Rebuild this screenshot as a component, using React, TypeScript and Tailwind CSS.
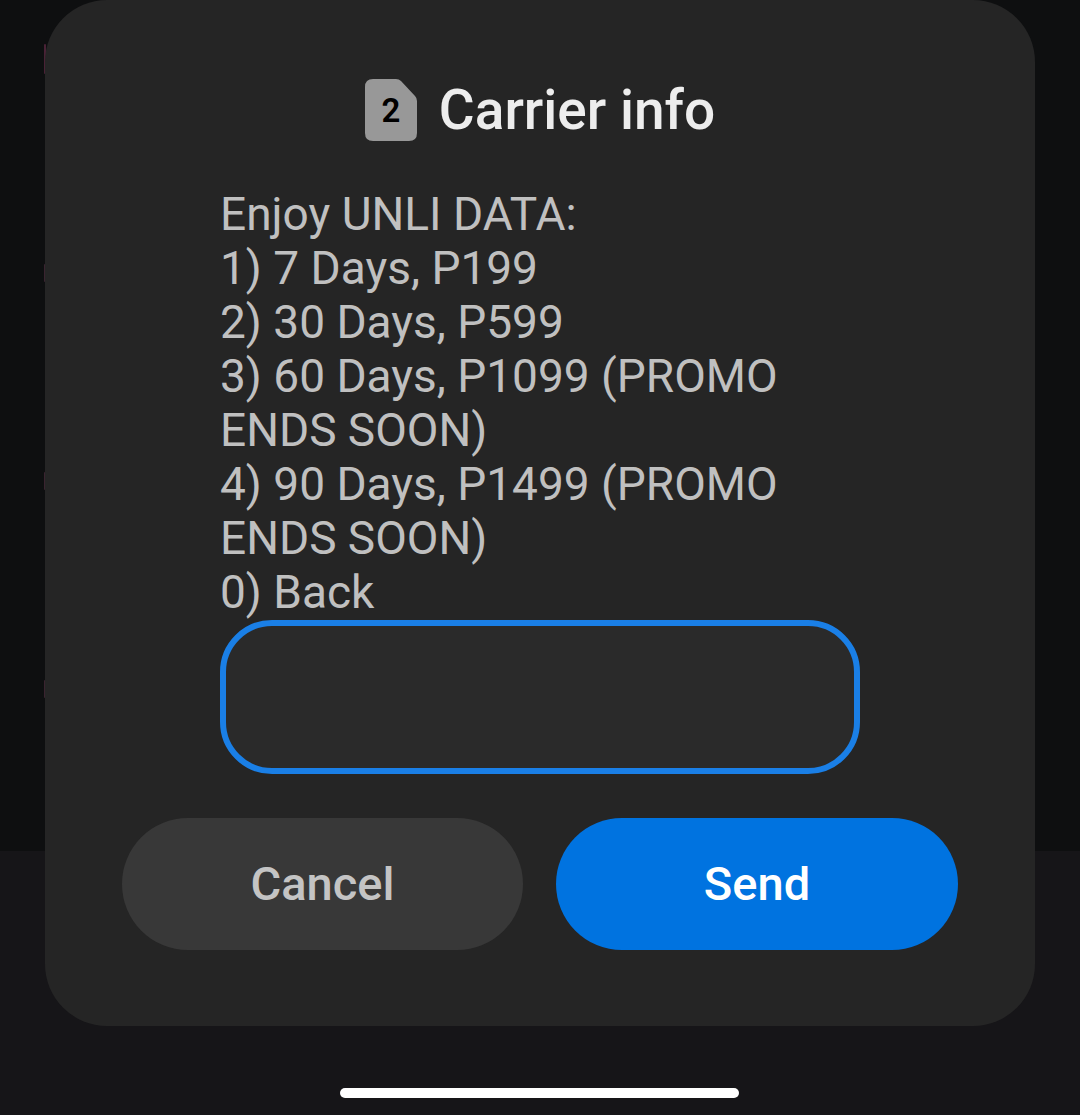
import React from "react";

const lines = [
  "Enjoy UNLI DATA:",
  "1) 7 Days, P199",
  "2) 30 Days, P599",
  "3) 60 Days, P1099 (PROMO",
  "ENDS SOON)",
  "4) 90 Days, P1499 (PROMO",
  "ENDS SOON)",
  "0) Back",
];

function SimIcon() {
  return (
    <div className="relative h-[62px] w-[52px]">
      <svg width="52" height="62" viewBox="0 0 52 62" className="absolute inset-0">
        <path
          d="M8 0H31Q34 0 36 2L50 17Q52 19 52 22V54Q52 62 44 62H8Q0 62 0 54V8Q0 0 8 0Z"
          fill="#989898"
        />
      </svg>
      <span className="absolute inset-0 flex items-center justify-center text-[33px] font-semibold leading-none text-black">
        2
      </span>
    </div>
  );
}

export default function App() {
  return (
    <div className="relative h-[1115px] w-[1080px] overflow-hidden bg-[#161518] font-['Roboto',sans-serif]">
      {/* page behind the dialog */}
      <div className="h-[851px] bg-[#0e0f10]" />

      {/* faint edges of the dimmed content */}
      <div className="absolute left-[44px] top-[44px] h-[30px] w-[2px] rounded-full bg-[#4a2236]" />
      <div className="absolute left-[44px] top-[264px] h-[18px] w-[2px] rounded-full bg-[#3a2430]" />
      <div className="absolute left-[44px] top-[472px] h-[18px] w-[2px] rounded-full bg-[#3a2430]" />
      <div className="absolute left-[44px] top-[680px] h-[18px] w-[2px] rounded-full bg-[#3a2430]" />

      <div className="absolute left-[45px] top-0 flex h-[1026px] w-[990px] flex-col items-center rounded-[62px] bg-[#252525] pt-[79px]">
        <div className="flex h-[62px] items-center gap-[22px]">
          <SimIcon />
          <h1 className="text-[55px] font-medium leading-[62px] text-[#ededed]">Carrier info</h1>
        </div>

        <div className="ml-[175px] mt-[46px] w-[640px] self-start">
          <div className="whitespace-pre text-[46px] leading-[54px] text-[#c0c0c0]">
            {lines.map((l, i) => (
              <div key={i} className="h-[54px]">
                {l}
              </div>
            ))}
          </div>
          <div className="mt-px h-[154px] w-[640px] rounded-[52px] border-[6px] border-[#1a7fe6] bg-[#2a2a2a]" />
        </div>

        <div className="mt-[44px] flex w-[836px] gap-[33px]">
          <button className="flex h-[132px] w-[401px] items-center justify-center rounded-full bg-[#383838] text-[47px] font-medium text-[#c4c4c4]">
            Cancel
          </button>
          <button className="flex h-[132px] w-[402px] items-center justify-center rounded-full bg-[#0073e0] text-[47px] font-medium text-white">
            Send
          </button>
        </div>
      </div>

      <div className="absolute bottom-[17px] left-[340px] h-[10px] w-[399px] rounded-full bg-white" />
    </div>
  );
}
